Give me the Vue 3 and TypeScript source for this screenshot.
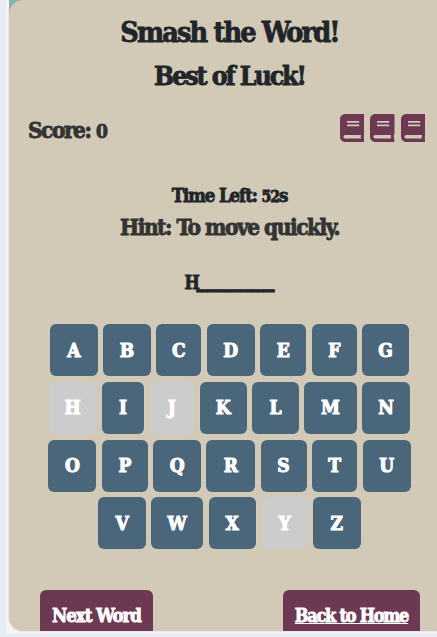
<script setup lang="ts">
interface Key {
  letter: string
  width: number
  used?: boolean
}

const rows: Key[][] = [
  [
    { letter: 'A', width: 47.5 },
    { letter: 'B', width: 48 },
    { letter: 'C', width: 45 },
    { letter: 'D', width: 48.5 },
    { letter: 'E', width: 46 },
    { letter: 'F', width: 45.5 },
    { letter: 'G', width: 46.5 },
  ],
  [
    { letter: 'H', width: 48, used: true },
    { letter: 'I', width: 42 },
    { letter: 'J', width: 45, used: true },
    { letter: 'K', width: 47.5 },
    { letter: 'L', width: 46.5 },
    { letter: 'M', width: 52.5 },
    { letter: 'N', width: 48.5 },
  ],
  [
    { letter: 'O', width: 48 },
    { letter: 'P', width: 46.5 },
    { letter: 'Q', width: 47.5 },
    { letter: 'R', width: 49 },
    { letter: 'S', width: 46 },
    { letter: 'T', width: 45.5 },
    { letter: 'U', width: 48 },
  ],
  [
    { letter: 'V', width: 47.5 },
    { letter: 'W', width: 52 },
    { letter: 'X', width: 47.5 },
    { letter: 'Y', width: 46.5, used: true },
    { letter: 'Z', width: 47.5 },
  ],
]

const score = 0
const lives = 3
const timeLeft = 52
</script>

<template>
  <div class="page">
    <div class="frame">
      <main class="card">
        <h1 class="title">Smash the Word!</h1>
        <h2 class="subtitle">Best of Luck!</h2>
        <div class="status">
          <span class="score">Score: <span class="digits">{{ score }}</span></span>
          <div class="lives">
            <svg v-for="n in lives" :key="n" class="book" viewBox="0 0 448 512" preserveAspectRatio="none">
              <path
                d="M448 360V24c0-13.300-10.700-24-24-24H96C43 0 0 43 0 96v320c0 53 43 96 96 96h328c13.300 0 24-10.700 24-24v-16c0-7.500-3.500-14.300-8.900-18.700-4.200-15.400-4.200-59.300 0-74.700 5.400-4.300 8.900-11.100 8.900-18.600zM128 134c0-3.300 2.700-6 6-6h212c3.300 0 6 2.700 6 6v20c0 3.300-2.700 6-6 6H134c-3.300 0-6-2.700-6-6v-20zm0 64c0-3.300 2.700-6 6-6h212c3.300 0 6 2.700 6 6v20c0 3.300-2.700 6-6 6H134c-3.300 0-6-2.700-6-6v-20zm253.400 250H96c-17.700 0-32-14.300-32-32 0-17.600 14.400-32 32-32h285.400c-1.900 17.100-1.900 46.900 0 64z"
              />
            </svg>
          </div>
        </div>
        <p class="timer">Time Left: <span class="digits">{{ timeLeft }}</span>s</p>
        <p class="hint">Hint: To move quickly.</p>
        <p class="word">H<span class="blanks">_______</span></p>
        <div class="keyboard">
          <div v-for="(row, i) in rows" :key="i" class="row">
            <button
              v-for="key in row"
              :key="key.letter"
              class="key"
              :class="{ used: key.used }"
              :style="{ width: key.width + 'px' }"
              :disabled="key.used"
            >{{ key.letter }}</button>
          </div>
        </div>
        <div class="actions">
          <button class="action next">Next Word</button>
          <a class="action home">Back to Home</a>
        </div>
      </main>
    </div>
  </div>
</template>

<style>
body {
  margin: 0;
  overflow: hidden;
  background: #e7ebf4;
}
</style>

<style scoped>
.page {
  box-sizing: border-box;
  width: 437px;
  height: 637px;
  padding-left: 6px;
  overflow: hidden;
  background: #e7ebf4;
  font-family: "DejaVu Serif Condensed", "DejaVu Serif", serif;
  font-stretch: condensed;
  font-weight: 700;
  color: #212529;
  -webkit-text-stroke: 0.8px currentColor;
}
.frame {
  box-sizing: border-box;
  height: 634px;
  padding: 0 0 3px 3px;
  background: linear-gradient(135deg, #83bbad 0 16px, transparent 16px) 3px 0 / 16px 20px no-repeat, #f5f5f5;
}
.card {
  display: flex;
  flex-direction: column;
  box-sizing: border-box;
  height: 631px;
  overflow: hidden;
  border-radius: 14px 0 0 14px;
  background: #d2cab7;
  box-shadow: 0 0 2px rgba(0, 0, 0, 0.2);
}
h1, h2, p {
  margin: 0;
  padding-left: 13px;
  text-align: center;
  white-space: nowrap;
}
.title {
  height: 44px;
  margin-top: 10px;
  font-size: 28.500px;
  line-height: 44px;
  letter-spacing: -1.850px;
}
.subtitle {
  height: 44px;
  font-size: 26.500px;
  line-height: 44px;
  letter-spacing: -2.100px;
}
.status {
  display: flex;
  justify-content: space-between;
  align-items: center;
  height: 44px;
  margin-top: 16px;
  padding: 0 12px 0 19px;
  color: #333;
}
.score {
  font-size: 22.500px;
  letter-spacing: -1.500px;
}
.digits {
  font-size: 0.85em;
}
.lives {
  display: flex;
  gap: 6px;
  padding-bottom: 4px;
}
.book {
  width: 24.500px;
  height: 28px;
  fill: #6d3852;
}
.timer {
  height: 28px;
  margin-top: 36px;
  font-size: 18.500px;
  line-height: 28px;
  letter-spacing: -1.100px;
}
.hint {
  height: 34px;
  font-size: 22.500px;
  line-height: 34px;
  letter-spacing: -1.500px;
  color: #333;
}
.word {
  display: flex;
  justify-content: center;
  height: 30px;
  margin-top: 22px;
  padding-left: 13px;
  font-size: 18px;
  line-height: 33px;
  letter-spacing: -3.500px;
}
.blanks {
  font-size: 24.800px;
  line-height: 24px;
  letter-spacing: 0;
}
.keyboard {
  display: flex;
  flex-direction: column;
  gap: 5.700px;
  margin-top: 28.200px;
  padding-left: 13px;
}
.row {
  display: flex;
  justify-content: center;
  gap: 5.300px;
}
.key {
  flex: none;
  height: 52px;
  padding: 0 0 1px;
  border: 0;
  border-radius: 6px;
  background: #49667b;
  color: #fff;
  font: inherit;
  font-size: 19px;
  -webkit-text-stroke: 1px currentColor;
}
.key.used {
  background: #ccc;
}
.actions {
  display: flex;
  flex: none;
  justify-content: space-between;
  margin-top: 40.500px;
  padding: 0 17px 0 31px;
}
.action {
  box-sizing: border-box;
  flex: none;
  height: 52px;
  padding: 0;
  border: 0;
  border-radius: 6px 6px 0 0;
  background: #6d3852;
  color: #fff;
  font: inherit;
  font-size: 18.500px;
  line-height: 52px;
  text-align: center;
  white-space: nowrap;
}
.next {
  width: 113px;
  letter-spacing: -1px;
}
.home {
  width: 137px;
  font-size: 18px;
  letter-spacing: -1.250px;
  text-decoration: underline;
}
</style>
